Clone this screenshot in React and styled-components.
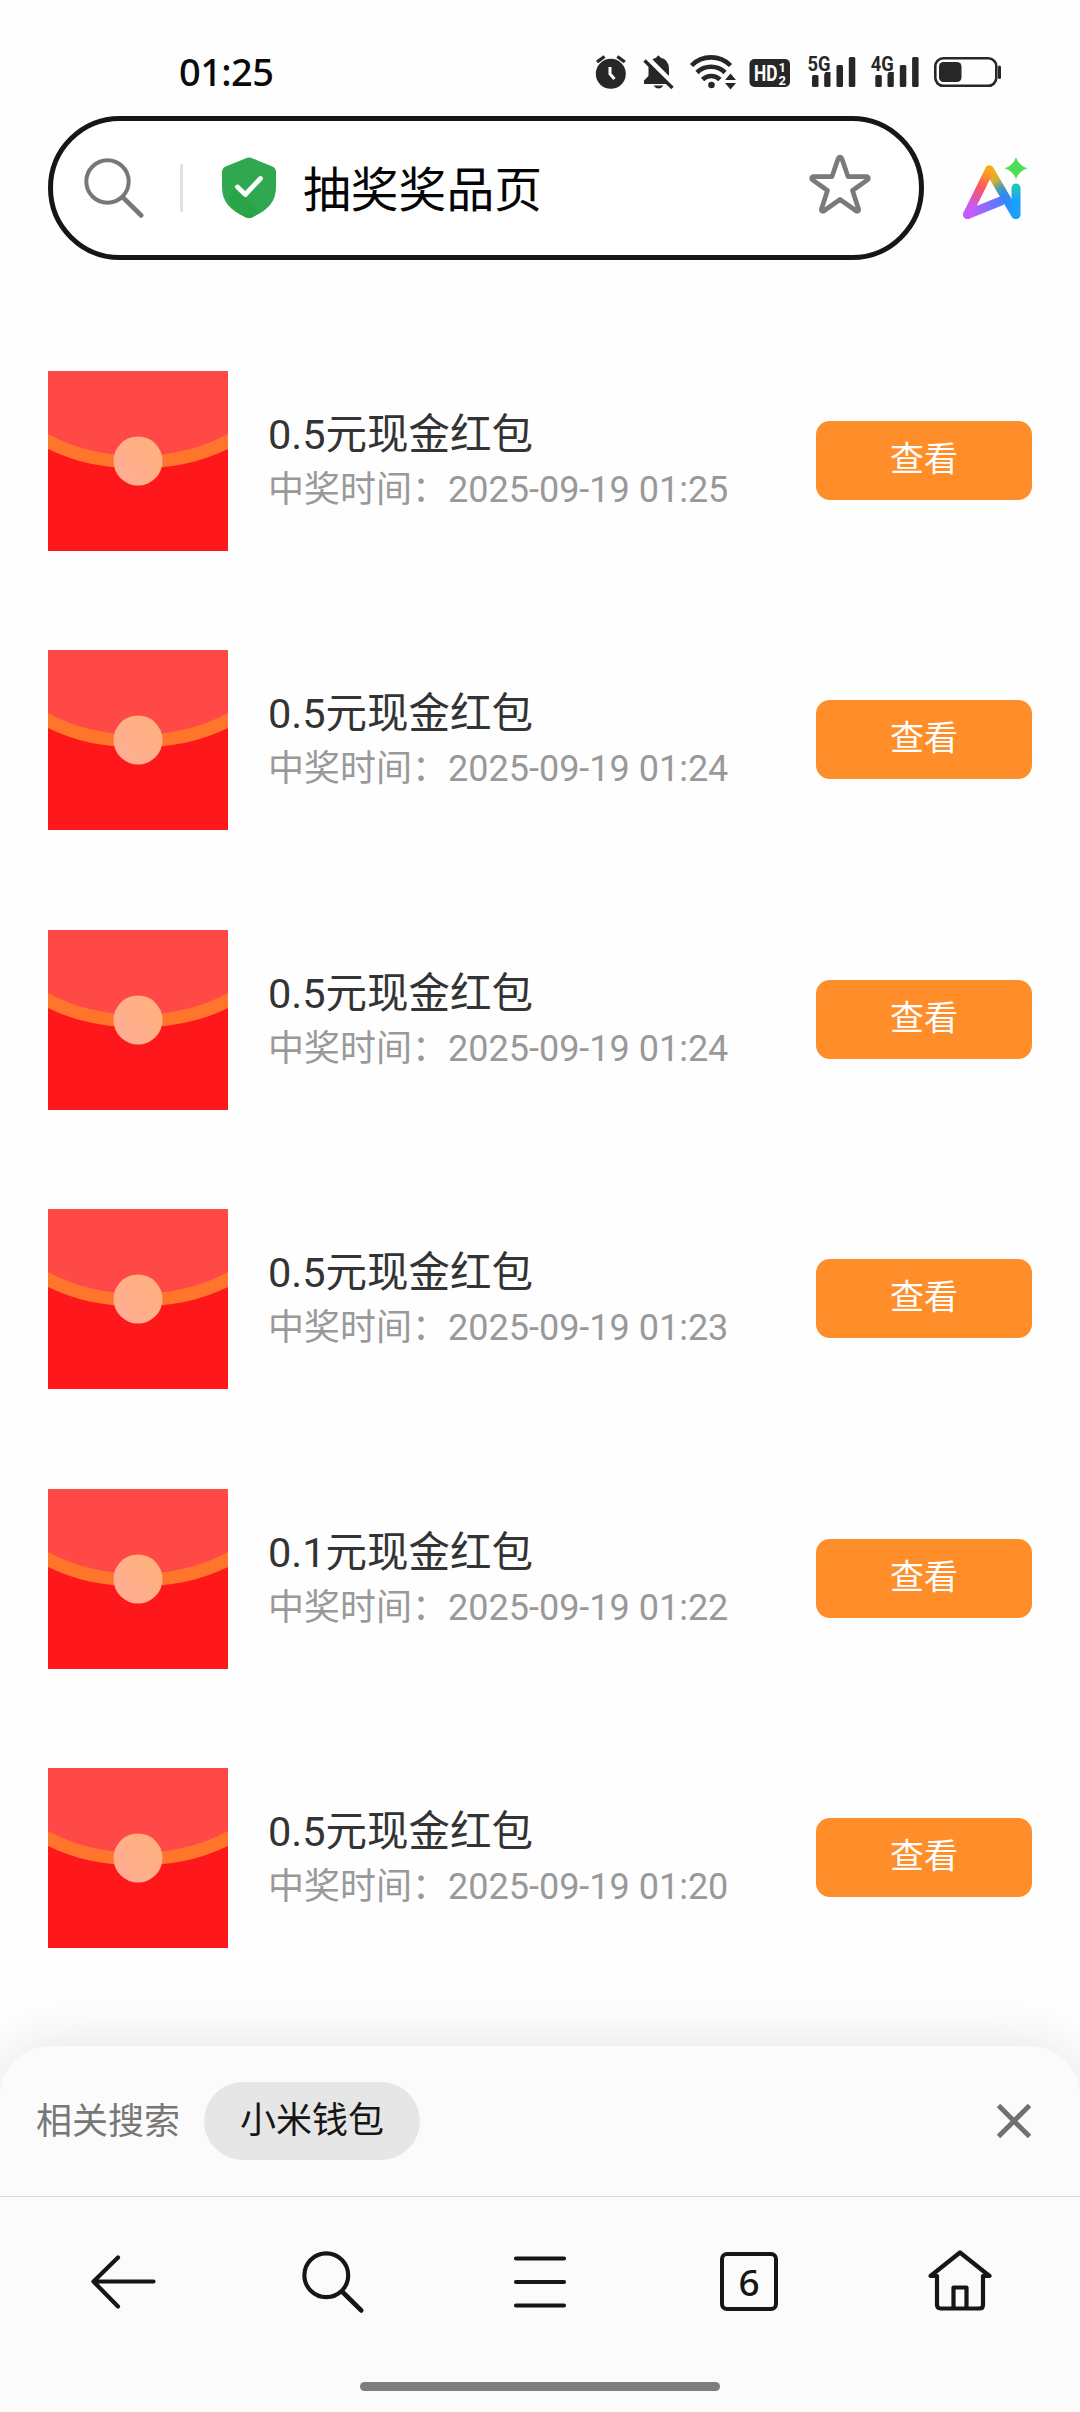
import React from "react";
import styled, { createGlobalStyle } from "styled-components";

const latin = `Roboto, "Noto Sans CJK SC", sans-serif`;
const ink = "#161616";

const Global = createGlobalStyle`
  * { box-sizing: border-box; }
  body { margin: 0; background: #fff; font-family: ${latin}; }
  button { border: 0; padding: 0; margin: 0; background: none; font: inherit; color: inherit; display: block; }
  svg { display: block; flex: none; overflow: visible; }
`;

const Screen = styled.div`
  width: 1080px;
  height: 2412px;
  display: flex;
  flex-direction: column;
  background: #fefefe;
  overflow: hidden;
`;

const StatusBar = styled.header`
  height: 116px;
  padding: 26px 79px 0 179px;
  display: flex;
  justify-content: space-between;
  align-items: center;
`;

const Clock = styled.time`
  font: 500 38px/44px "Noto Sans", "Noto Sans CJK SC", sans-serif;
  letter-spacing: -0.6px;
  color: #0a0a0a;
`;

const StatusIcons = styled.div`
  width: 406px;
  height: 40px;
  color: #272727;
`;

const TopRow = styled.div`
  display: flex;
  align-items: center;
  padding: 0 52px 0 48px;
  justify-content: space-between;
`;

const SearchBox = styled.div`
  width: 876px;
  height: 144px;
  border: 5px solid ${ink};
  border-radius: 72px;
  background: #fff;
  display: flex;
  align-items: center;
  padding: 0 49px 0 31px;
`;

const Divider = styled.span`
  width: 3px;
  height: 48px;
  margin: 0 39px 0 36px;
  background: #e2e2e2;
`;

const PageTitle = styled.div`
  flex: 1;
  margin-left: 27px;
  padding-top: 5px;
  font-size: 47.8px;
  line-height: 60px;
  color: #050505;
`;

const StarSlot = styled.div`
  padding-bottom: 8px;
`;

const List = styled.main`
  flex: 1;
  padding: 111px 48px 0;
  display: flex;
  flex-direction: column;
  gap: 99.4px;
`;

const Row = styled.article`
  display: flex;
  align-items: center;
  height: 180px;
`;

const Info = styled.div`
  flex: 1;
  margin-left: 40px;
  padding-top: 2px;
`;

const PrizeName = styled.div`
  font-size: 41.5px;
  line-height: 56px;
  color: #333;
`;

const PrizeTime = styled.div`
  font-size: 36px;
  line-height: 54px;
  color: #999;
`;

const ViewButton = styled.button`
  && {
    width: 216px;
    height: 79px;
    margin-bottom: 1px;
    border-radius: 14px;
    background: #ff8d29;
    color: #fff;
    font-size: 34px;
    line-height: 77px;
    padding-bottom: 2px;
    text-align: center;
  }
`;

const Sheet = styled.footer`
  height: 366px;
  background: #fbfbfb;
  border-radius: 50px 50px 0 0;
  box-shadow: 0 0 60px rgba(0, 0, 0, 0.11);
  display: flex;
  flex-direction: column;
`;

const Related = styled.div`
  height: 151px;
  border-bottom: 1px solid #d9d9d9;
  display: flex;
  align-items: center;
  padding: 0 49px 0 36px;
  font-size: 36px;
`;

const RelatedLabel = styled.span`
  color: #777;
  width: 168px;
  line-height: 50px;
  padding-top: 2px;
`;

const Chip = styled.button`
  && {
    width: 216px;
    height: 78px;
    border-radius: 39px;
    background: #e6e6e6;
    color: ${ink};
    margin-right: auto;
    line-height: 79px;
  }
`;

const Nav = styled.nav`
  height: 170px;
  padding-left: 91px;
  display: grid;
  grid-template-columns: 211px 212px 206px 208px 64px;
  justify-items: start;
  align-items: center;
`;

const TabCount = styled.span`
  width: 58px;
  height: 59px;
  border: 4px solid ${ink};
  border-radius: 7px;
  font: 500 37px/51px "Noto Sans", sans-serif;
  text-align: center;
  color: ${ink};
  margin: 0 0 2px;
`;

const HomeBar = styled.div`
  width: 360px;
  height: 9px;
  margin: 15px auto 0;
  border-radius: 5px;
  background: #7d7d7d;
`;

function Signal({ x, label }) {
  return (
    <g transform={`translate(${x} 0)`} fill="currentColor">
      <text x="-1" y="21" fontSize="21" fontWeight="700" fontFamily="Roboto, sans-serif" textLength="23" lengthAdjust="spacingAndGlyphs">{label}</text>
      <rect x="3.5" y="25" width="6.5" height="12" rx="1.5" />
      <path d="M15.7 24.5 17 22h5v13.500q0 1.500-1.500 1.500h-3.300q-1.500 0-1.500-1.500z" />
      <rect x="28" y="15" width="6.500" height="22" rx="1.500" />
      <rect x="40.300" y="7" width="6.500" height="30" rx="1.500" />
    </g>
  );
}

function StatusGlyphs() {
  return (
    <svg width="406" height="40" viewBox="0 1 406 40" fill="none">
      <circle cx="15.800" cy="23.800" r="15" fill="currentColor" />
      <path d="M2 12 9.500 6.500M29.800 12 22.300 6.500" stroke="currentColor" strokeWidth="3.400" />
      <path d="M15 17v7l4.500 5" stroke="#fff" strokeWidth="3" />
      <path d="M61.500 7.500q1.800-4 3.800 0 8.700 2 8.700 11.500v8l4.500 4.500V34H49v-3.500l4.500-4.500v-8q0-8.500 8-10.500z" fill="currentColor" />
      <path d="M58.500 35.500h10q-2 3-5 3t-5-3z" fill="currentColor" />
      <path d="M52 7.500 80.500 36" stroke="#fff" strokeWidth="5" />
      <path d="M49.500 10.500 77.500 38" stroke="currentColor" strokeWidth="3.400" />
      <g stroke="currentColor" strokeWidth="4.600">
        <path d="M96.500 15.500a27.500 27.500 0 0 1 39 0" />
        <path d="M102 22.500a20 20 0 0 1 28 0" />
        <path d="M107.500 29.500a12.500 12.500 0 0 1 17.500 0" />
      </g>
      <circle cx="116.500" cy="35" r="3.300" fill="currentColor" />
      <path d="M135.500 23.500 141 30h-11zM135.500 39.500l5.500-6.500h-11z" fill="currentColor" />
      <rect x="154.500" y="9" width="40.500" height="28" rx="5" fill="currentColor" />
      <text x="159" y="31" fill="#fff" fontSize="22" fontWeight="700" fontFamily="Roboto, sans-serif" textLength="23.500" lengthAdjust="spacingAndGlyphs">HD</text>
      <text x="183.500" y="21.500" fill="#fff" fontSize="13" fontWeight="700" fontFamily="Roboto, sans-serif">1</text>
      <text x="183.500" y="34.500" fill="#fff" fontSize="13" fontWeight="700" fontFamily="Roboto, sans-serif">2</text>
      <Signal x={213.500} label="5G" />
      <Signal x={276.800} label="4G" />
      <rect x="340.300" y="8.300" width="61" height="27.500" rx="8" stroke="currentColor" strokeWidth="2.600" />
      <rect x="344" y="12" width="22.500" height="20" rx="4.500" fill="currentColor" />
      <path d="M404.500 17v10.500" stroke="currentColor" strokeWidth="3" strokeLinecap="round" />
    </svg>
  );
}

function SearchGlyph({ size, color }) {
  return (
    <svg width={size} height={size} viewBox="0 0 60 60" fill="none" stroke={color} strokeLinecap="round">
      <circle cx="23.500" cy="23.500" r="21.200" strokeWidth="4" />
      <path d="M39 39.500 57.300 57.500" strokeWidth="4.600" />
    </svg>
  );
}

function ShieldGlyph() {
  return (
    <svg width="54" height="62" viewBox="0 0 54 62" fill="none">
      <path d="M24 1.200q3-1.500 6 0l20.500 8.300q3.500 1.500 3.500 5.500v15C54 45 46 53 30 60.500q-3 1.500-6 0C8 53 0 45 0 30V15q0-4 3.500-5.500z" fill="#2fa84f" />
      <path d="M13 30 6 42q6 12 18 18.500 3 1.500 6 0l8-5z" fill="#26a243" opacity=".6" />
      <path d="m15.500 30 7.800 7.500 15.200-16" stroke="#fff" strokeWidth="4.800" strokeLinecap="round" strokeLinejoin="round" />
    </svg>
  );
}

function StarGlyph() {
  return (
    <svg width="60" height="58" viewBox="0 0 60 58" fill="none" stroke="#7a7a7a" strokeWidth="4.700" strokeLinejoin="round">
      <path d="M28.300 3.300q1.700-2.600 3.400 0L38 21.600h19q2.300 1.200.8 3L42.500 35.500l6.200 19q-.2 2.300-2.400 1.500L30 44.500 13.700 56q-2.200.8-2.400-1.500l6.200-19L2.200 24.600q-1.500-1.800.8-3h19z" />
    </svg>
  );
}

function AiGlyph() {
  return (
    <svg width="65" height="62" viewBox="0 0 65 62" fill="none">
      <defs>
        <linearGradient id="aiLeft" x1="27" y1="10" x2="4" y2="58" gradientUnits="userSpaceOnUse">
          <stop offset=".08" stopColor="#fba81c" />
          <stop offset=".42" stopColor="#fb5560" />
          <stop offset=".85" stopColor="#c45bfa" />
        </linearGradient>
        <linearGradient id="aiBar" x1="4" y1="58" x2="40" y2="42" gradientUnits="userSpaceOnUse">
          <stop offset=".1" stopColor="#c45bfa" />
          <stop offset="1" stopColor="#4a80fb" />
        </linearGradient>
        <linearGradient id="aiRight" x1="27" y1="13" x2="52" y2="58" gradientUnits="userSpaceOnUse">
          <stop offset="0" stopColor="#fba81c" />
          <stop offset=".22" stopColor="#d8b030" />
          <stop offset=".42" stopColor="#3f9bb8" />
          <stop offset=".6" stopColor="#3285fb" />
          <stop offset="1" stopColor="#1ba0fd" />
        </linearGradient>
        <linearGradient id="aiStem" x1="53" y1="28" x2="53" y2="60" gradientUnits="userSpaceOnUse">
          <stop offset="0" stopColor="#20c8b0" />
          <stop offset=".5" stopColor="#1ba0fd" />
        </linearGradient>
      </defs>
      <g strokeWidth="9" strokeLinecap="round" strokeLinejoin="round">
        <path d="M4.500 57.500 38 44" stroke="url(#aiBar)" />
        <path d="M26.500 13 52.500 57.500" stroke="url(#aiRight)" />
        <path d="M53 57.500V31" stroke="url(#aiStem)" />
        <path d="M4.500 57.500 26.500 13" stroke="url(#aiLeft)" />
      </g>
      <path d="M53 0q2.500 8.500 11.500 11.300Q55.500 14 53 22.500 50.500 14 41.500 11.300 50.500 8.500 53 0z" fill="#4fdd55" />
    </svg>
  );
}

const EnvelopeArt = styled.svg`
  && { overflow: hidden; }
`;

function Envelope() {
  return (
    <EnvelopeArt width="180" height="180" viewBox="0 0 180 180">
      <defs>
        <linearGradient id="seal" x1="1" y1="0" x2="0" y2="1">
          <stop offset="0" stopColor="#ffb278" />
          <stop offset="1" stopColor="#ffac98" />
        </linearGradient>
      </defs>
      <path d="M0 0h180v180H0z" fill="#ff181b" />
      <path d="M0 0h180v70Q90 112 0 70z" fill="#ff4946" />
      <path d="M0 63C52 92 128 92 180 63V78C128 104 52 104 0 78z" fill="#ff752b" />
      <circle cx="90" cy="90" r="24.500" fill="url(#seal)" />
    </EnvelopeArt>
  );
}

const prizes = [
  ["0.5元现金红包", "2025-09-19 01:25"],
  ["0.5元现金红包", "2025-09-19 01:24"],
  ["0.5元现金红包", "2025-09-19 01:24"],
  ["0.5元现金红包", "2025-09-19 01:23"],
  ["0.1元现金红包", "2025-09-19 01:22"],
  ["0.5元现金红包", "2025-09-19 01:20"],
];

export default function App() {
  return (
    <Screen>
      <Global />
      <StatusBar>
        <Clock>01:25</Clock>
        <StatusIcons><StatusGlyphs /></StatusIcons>
      </StatusBar>
      <TopRow>
        <SearchBox>
          <SearchGlyph size={60} color="#777" />
          <Divider />
          <ShieldGlyph />
          <PageTitle>抽奖奖品页</PageTitle>
          <StarSlot><StarGlyph /></StarSlot>
        </SearchBox>
        <AiGlyph />
      </TopRow>
      <List>
        {prizes.map(([name, time], i) => (
          <Row key={i}>
            <Envelope />
            <Info>
              <PrizeName>{name}</PrizeName>
              <PrizeTime>中奖时间：{time}</PrizeTime>
            </Info>
            <ViewButton>查看</ViewButton>
          </Row>
        ))}
      </List>
      <Sheet>
        <Related>
          <RelatedLabel>相关搜索</RelatedLabel>
          <Chip>小米钱包</Chip>
          <svg width="34" height="34" viewBox="0 0 34 34" stroke="#707070" strokeWidth="4.800">
            <path d="m1.500 1.500 31 31m0-31-31 31" />
          </svg>
        </Related>
        <Nav>
          <svg width="65" height="54" viewBox="0 0 65 54" fill="none" stroke={ink} strokeWidth="4.200" strokeLinecap="round" strokeLinejoin="round">
            <path d="M27 2.500 2.500 26.500 27 51.500M2.500 26.500H62.500" />
          </svg>
          <SearchGlyph size={62} color={ink} />
          <svg width="52" height="52" viewBox="0 0 52 52" fill="none" stroke={ink} strokeWidth="4.200" strokeLinecap="round">
            <path d="M2 2.500h48M2 26h48M2 49.500h48" />
          </svg>
          <TabCount>6</TabCount>
          <svg width="64" height="64" viewBox="0 0 64 64" fill="none" stroke={ink} strokeWidth="4.200" strokeLinejoin="round" strokeLinecap="round">
            <path d="M9 26H2.500L32 2.500 61.500 26H55v29q0 3.500-3.500 3.500h-39Q9 58.500 9 55zM25.500 58.500v-21h13v21" />
          </svg>
        </Nav>
        <HomeBar />
      </Sheet>
    </Screen>
  );
}
